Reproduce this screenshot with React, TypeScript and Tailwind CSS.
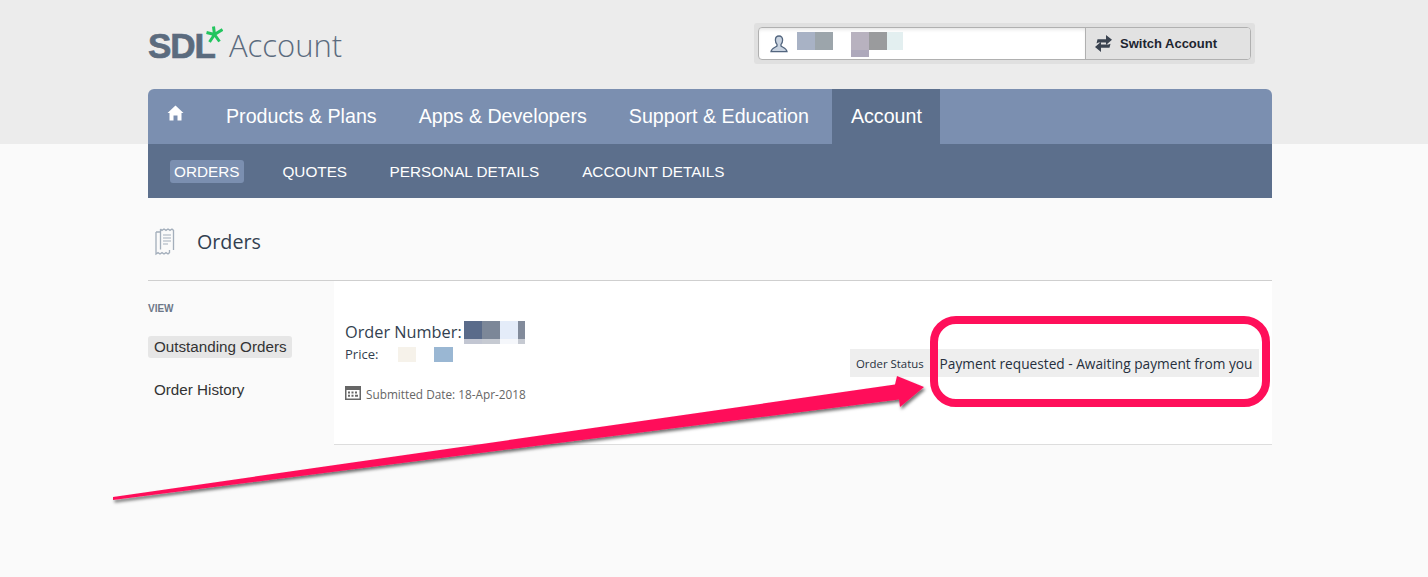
import React from "react";

const sans = "font-['Liberation_Sans',Arial,sans-serif]";
const human = "font-['Open_Sans','Noto_Sans',sans-serif]";

function Blocks({ items, className }: { items: [number, number, number, number, string][]; className: string }) {
  return (
    <span className={className}>
      {items.map(([l, t, w, h, c], i) => (
        <span key={i} className="absolute block" style={{ left: l, top: t, width: w, height: h, background: c }} />
      ))}
    </span>
  );
}

function HomeIcon() {
  return (
    <svg width="17" height="16" viewBox="0 0 17 16" fill="#fff">
      <path d="M8.5 0.5 L16.5 8 L14.5 8 L14.5 15.5 L10.5 15.5 L10.5 10.5 L6.5 10.5 L6.5 15.5 L2.5 15.5 L2.5 8 L0.5 8 Z" />
    </svg>
  );
}

function UserIcon() {
  return (
    <svg width="18" height="18" viewBox="0 0 18 18" fill="#c9d3e0" stroke="#53667f" strokeWidth="1.3">
      <path d="M9 1 C6.5 1 5.4 2.8 5.4 5 C5.4 7 6.2 8.6 7 9.4 L7 11 C5.5 12.5 1.6 13 1 16.6 L17 16.6 C16.4 13 12.5 12.5 11 11 L11 9.4 C11.8 8.6 12.6 7 12.6 5 C12.6 2.8 11.5 1 9 1 Z" />
    </svg>
  );
}

function SwapIcon() {
  return (
    <svg width="17" height="17" viewBox="0 0 17 17" fill="#3a4350">
      <path d="M1.5 8.5 L2.5 4.2 L11 4.2 L11 0 L17 4.8 L11 10 L11 7.6 L3.5 7.6 Z" />
      <path d="M15.5 8.8 L14.5 12.8 L6 12.8 L6 17 L0 12 L6 6.8 L6 9.4 L13.5 9.4 Z" />
    </svg>
  );
}

function ReceiptIcon() {
  return (
    <svg className="mt-[6px]" width="20" height="28" viewBox="0 0 20 28" fill="none" stroke="#a3aebb" strokeWidth="1.3">
      <path d="M5.5 1 L7 2.4 L9 1 L11 2.4 L13 1 L15 2.4 L17 1 L18.5 2.4 L18.5 22 M5.5 1 L5.5 21.5" />
      <path d="M1 4 L5.5 4 M1 4 L1 26 L3 24.6 L5 26 L7 24.6 L9 26 L11 24.6 L13 26 L14.5 24.6 L14.5 22" />
      <path d="M8 7 H16 M8 10 H16 M8 13 H16 M8 16 H13" strokeWidth="1" />
    </svg>
  );
}

function CalendarIcon() {
  return (
    <svg className="-mt-[3px]" width="16" height="14" viewBox="0 0 16 14">
      <rect x="0.75" y="0.75" width="14.5" height="12.5" fill="#fff" stroke="#666" strokeWidth="1.5" />
      <rect x="0.5" y="0.5" width="15" height="3.5" fill="#666" />
      <path d="M3 5.5h2v2H3zM6.5 5.5h2v2h-2zM10 5.5h2v2h-2zM3 8.8h2v2H3zM6.5 8.8h2v2h-2zM10 8.8h3v2h-3z" fill="#666" />
    </svg>
  );
}

function Star() {
  return (
    <svg className="absolute left-[58px] top-[6px]" width="17" height="17" viewBox="0 0 17 17" stroke="#22c55e" strokeWidth="3" fill="none">
      <path d="M7.5 0.5 L8.5 8.5 M16.5 3.5 L8.5 8.5 M13.5 15.5 L8.5 8.5 M3.5 16 L8.5 8.5 M0.5 6.5 L8.5 8.5" />
    </svg>
  );
}

export default function App() {
  return (
    <div className="relative h-[577px] w-full overflow-hidden bg-[#fafafa]">
      <div className="h-[144px] bg-[#ececec]">
        <div className="ml-[148px] flex h-[89px] w-[1107px] items-start justify-between">
          <div className="relative mt-[20px] flex h-[50px] items-center text-[#5b6b7e]">
            <span className={`${sans} w-[81px] text-[35px] font-bold leading-none tracking-[-1px] [-webkit-text-stroke:0.7px_#5b6b7e]`}>SDL</span>
            <Star />
            <span className={`${human} text-[31px] font-light leading-none`}>Account</span>
          </div>
          <div className="mt-[23px] rounded-[3px] bg-[#e0e0e0] p-[4px]">
            <div className="flex h-[33px] w-[493px] overflow-hidden rounded-[4px] border border-[#b0b0b0] bg-white">
              <div className="relative flex w-[326px] items-center pl-[11px] shadow-[inset_0_3px_4px_-2px_#ddd]">
                <UserIcon />
                <Blocks
                  className="absolute left-[38px] top-[4px]"
                  items={[
                    [0, 0, 18, 18, "#a8b2c5"],
                    [18, 0, 18, 18, "#9ca5ab"],
                    [54, 0, 18, 18, "#b8b2bf"],
                    [54, 18, 18, 7, "#aea9bc"],
                    [72, 0, 18, 18, "#9a9b9d"],
                    [90, 0, 16, 18, "#e3eff0"],
                  ]}
                />
              </div>
              <div className={`${sans} flex flex-1 items-center gap-[8px] border-l border-[#b0b0b0] bg-[#e2e2e2] pl-[9px] text-[13px] font-bold text-[#1d2530]`}>
                <SwapIcon />
                <span>Switch Account</span>
              </div>
            </div>
          </div>
        </div>
        <nav className={`${sans} ml-[148px] flex h-[55px] w-[1124px] rounded-t-[6px] bg-[#7b8fb0] text-[19.65px] text-white`}>
          <div className="flex w-[59px] justify-center pr-[4px] pt-[16px]">
            <HomeIcon />
          </div>
          <div className="flex gap-[42px] pl-[19px] pt-[14px] leading-[26px]">
            <span>Products &amp; Plans</span>
            <span>Apps &amp; Developers</span>
            <span>Support &amp; Education</span>
          </div>
          <div className="ml-[23px] w-[108px] bg-[#5c6f8c] pl-[19px] pt-[14px] leading-[26px]">Account</div>
        </nav>
      </div>
      <div className={`${sans} ml-[148px] flex h-[54px] w-[1124px] items-center gap-[38px] bg-[#5c6f8c] pl-[22px] text-[15.3px] text-white`}>
        <span className="rounded-[3px] bg-[#7b8fb0] px-[4px] py-[1px] pr-[5px] leading-[21px]">ORDERS</span>
        <span className="leading-[23px]">QUOTES</span>
        <span className="ml-[4.5px] leading-[23px]">PERSONAL DETAILS</span>
        <span className="ml-[5px] leading-[23px]">ACCOUNT DETAILS</span>
      </div>
      <div className="ml-[148px] w-[1124px]">
        <div className="flex h-[83px] items-center border-b border-[#cfcfcf] pl-[7px]">
          <ReceiptIcon />
          <h1 className={`${human} ml-[22px] mt-[6px] text-[19.7px] leading-none text-[#333f50]`}>Orders</h1>
        </div>
        <div className="flex">
          <aside className={`${sans} w-[186px] pt-[22px]`}>
            <div className="text-[10px] font-bold leading-[12px] text-[#6d7788]">VIEW</div>
            <div className="mt-[21px] h-[22px] w-[144px] rounded-[3px] bg-[#e6e6e6] pl-[6px] text-[15.2px] leading-[22px] text-[#333]">Outstanding Orders</div>
            <div className="mt-[21px] pl-[6px] text-[15.2px] leading-[22px] text-[#333]">Order History</div>
          </aside>
          <main className={`${human} flex h-[164px] flex-1 items-start border-b border-[#ddd] bg-white`}>
            <div className="w-[516px] pl-[11px] pt-[37px]">
              <div className="relative text-[16.3px] leading-[28px] text-[#333f50]">
                Order Number:
                <Blocks
                  className="absolute left-[119px] top-[3px]"
                  items={[
                    [0, 0, 18, 18, "#5a6b8a"],
                    [18, 0, 18, 18, "#7c8798"],
                    [36, 0, 18, 18, "#e4ecf9"],
                    [54, 0, 7, 18, "#828b9b"],
                    [0, 18, 18, 5, "#c2c6d2"],
                    [18, 18, 18, 5, "#c6cad2"],
                    [36, 18, 18, 5, "#f5f7fb"],
                    [54, 18, 7, 5, "#c6cad2"],
                  ]}
                />
              </div>
              <div className="relative -mt-[1px] text-[13px] leading-[18px] text-[#333f50]">
                Price:
                <Blocks
                  className="absolute left-[53px] top-[2px]"
                  items={[
                    [0, 0, 18, 15, "#f6f2ea"],
                    [36, 0, 19, 15, "#9ab7d3"],
                  ]}
                />
              </div>
              <div className="mt-[22px] flex items-center gap-[5px] text-[11.8px] leading-[18px] text-[#666]">
                <CalendarIcon />
                <span>Submitted Date: 18-Apr-2018</span>
              </div>
            </div>
            <div className="mt-[68px] flex h-[28px] w-[409px] items-center whitespace-nowrap bg-[#eeeeee] pl-[6px] pt-[2px] text-[#26303d]">
              <span className="text-[11.4px]">Order Status</span>
              <span className="ml-[16px] text-[13.7px]">Payment requested - Awaiting payment from you</span>
            </div>
          </main>
        </div>
      </div>

      <svg className="absolute left-0 top-0" width="1428" height="577" fill="none">
        <defs>
          <filter id="s" x="-5%" y="-20%" width="110%" height="140%">
            <feDropShadow dx="1.5" dy="2.5" stdDeviation="1.5" floodColor="#000" floodOpacity="0.55" />
          </filter>
        </defs>
        <path d="M113 497 L895 384.5 L897 376 L924 387 L900 407 L899 399.5 L113 500 Z" fill="#ff0f5a" filter="url(#s)" />
      </svg>
      <div className="absolute left-[930px] top-[316px] h-[91px] w-[340px] rounded-[26px] border-[8px] border-[#ff0f5a]" />
    </div>
  );
}
